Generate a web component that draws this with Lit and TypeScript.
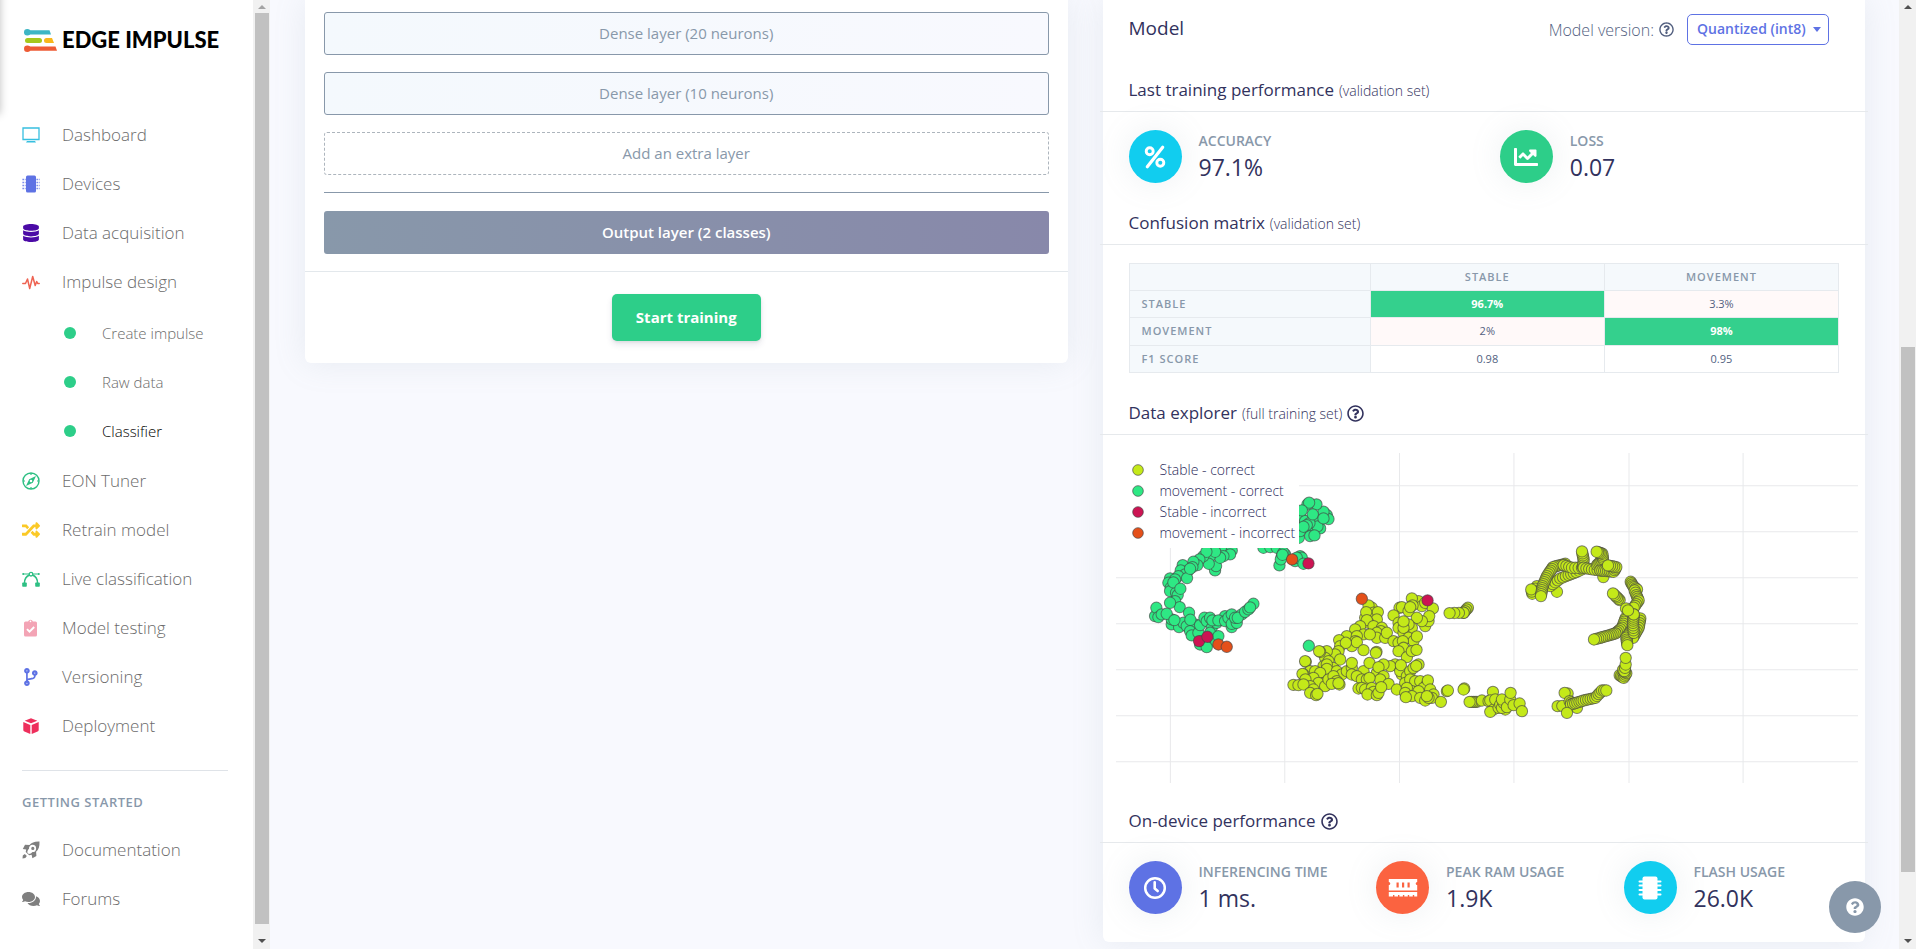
import { LitElement, html, svg, css, SVGTemplateResult, TemplateResult } from "lit";
import { customElement, property } from "lit/decorators.js";
import { classMap } from "lit/directives/class-map.js";

type Point = [number, number];

/* ---------- icons ---------- */

interface Icon {
  box: string;
  art: SVGTemplateResult;
}

const ICONS: Record<string, Icon> = {
  screen: {
    box: "0 0 18 18",
    art: svg`<path fill="none" stroke="currentColor" stroke-width="1.3" d="M1 2h16v11.500H1z"/><path fill="currentColor" d="M5 15h8l1 1.500H4z"/>`,
  },
  chip: {
    box: "0 0 18 18",
    art: svg`<rect x="4" y="0.500" width="10" height="17" rx="1.500" fill="currentColor"/><path stroke="currentColor" stroke-width="1.300" stroke-dasharray="1.300 1" d="M.5 4.500h3M.5 7.500h3M.5 10.500h3M.5 13.500h3M14.500 4.500h3M14.500 7.500h3M14.500 10.500h3M14.500 13.500h3"/>`,
  },
  chipBold: {
    box: "0 0 24 24",
    art: svg`<rect x="4.500" y="0.500" width="15" height="23" rx="2" fill="currentColor"/><path stroke="currentColor" stroke-width="2" stroke-linecap="round" d="M1.500 5.500h3M1.500 9.500h3M1.500 14h3M1.500 18.500h3M19.500 5.500h3M19.500 9.500h3M19.500 14h3M19.500 18.500h3"/>`,
  },
  database: {
    box: "-32 0 512 512",
    art: svg`<path fill="currentColor" d="M448 73.143v45.714C448 159.143 347.667 192 224 192S0 159.143 0 118.857V73.143C0 32.857 100.333 0 224 0s224 32.857 224 73.143zM448 176v102.857C448 319.143 347.667 352 224 352S0 319.143 0 278.857V176c48.125 33.143 136.208 48.572 224 48.572S399.874 209.143 448 176zm0 160v102.857C448 479.143 347.667 512 224 512S0 479.143 0 438.857V336c48.125 33.143 136.208 48.572 224 48.572S399.874 369.143 448 336z"/>`,
  },
  pulse: {
    box: "0 0 18 18",
    art: svg`<path fill="none" stroke="currentColor" stroke-width="1.500" stroke-linecap="round" stroke-linejoin="round" d="M.8 10.500h2.700l2-4.500 2.200 9.500 3-12 2.500 9 1.500-4 1 2h1.500"/>`,
  },
  compass: {
    box: "0 0 18 18",
    art: svg`<circle cx="9" cy="9" r="8" fill="none" stroke="currentColor" stroke-width="1.400"/><path fill="currentColor" fill-rule="evenodd" d="M14 4l-3.200 6.800L4 14l3.200-6.800zM9 7.700a1.300 1.300 0 100 2.600 1.300 1.300 0 000-2.600z"/><path stroke="currentColor" stroke-width="1.200" d="M9 1v2M9 15v2M1 9h2M15 9h2"/>`,
  },
  shuffle: {
    box: "0 0 512 512",
    art: svg`<path fill="currentColor" d="M504.971 359.029c9.373 9.373 9.373 24.569 0 33.941l-80 79.984c-15.010 15.010-40.971 4.490-40.971-16.971V416h-58.785a12.004 12.004 0 0 1-8.773-3.812l-70.556-75.596 53.333-57.143L352 336h32v-39.981c0-21.438 25.943-31.998 40.971-16.971l80 79.981zM12 176h84l52.781 56.551 53.333-57.143-70.556-75.596A11.999 11.999 0 0 0 122.785 96H12c-6.627 0-12 5.373-12 12v56c0 6.627 5.373 12 12 12zm372 0v39.984c0 21.460 25.961 31.980 40.971 16.971l80-79.984c9.373-9.373 9.373-24.569 0-33.941l-80-79.981C409.943 24.021 384 34.582 384 56.019V96h-58.785a12.004 12.004 0 0 0-8.773 3.812L96 336H12c-6.627 0-12 5.373-12 12v56c0 6.627 5.373 12 12 12h110.785c3.326 0 6.503-1.381 8.773-3.812L352 176h32z"/>`,
  },
  bezier: {
    box: "0 0 18 18",
    art: svg`<path fill="none" stroke="currentColor" stroke-width="1.500" d="M2.500 13C2.500 8.500 4.500 6.200 7.500 5M15.500 13c0-4.500-2-6.800-5-8"/><path stroke="currentColor" stroke-width="1" d="M1 4h6M11 4h6"/><circle cx="9" cy="4.200" r="1.800" fill="none" stroke="currentColor" stroke-width="1.300"/><rect x="0.200" y="12.500" width="4.600" height="4.300" rx="0.800" fill="currentColor"/><rect x="13.200" y="12.500" width="4.600" height="4.300" rx="0.800" fill="currentColor"/><circle cx="1.200" cy="4" r="1" fill="currentColor"/><circle cx="16.800" cy="4" r="1" fill="currentColor"/>`,
  },
  clipboard: {
    box: "0 0 18 18",
    art: svg`<path fill="currentColor" fill-rule="evenodd" d="M3.500 2.500h2.600a2.500 2.500 0 014.800 0h2.600A1.500 1.500 0 0115 4v12a1.500 1.500 0 01-1.500 1.500h-10A1.500 1.500 0 012 16V4a1.500 1.500 0 011.500-1.500zM8.500 1.600a.8.8 0 100 1.600.8.8 0 000-1.600z"/><path fill="none" stroke="#fff" stroke-width="1.900" d="M5 10.200l2.500 2.500 4.700-4.700"/>`,
  },
  branch: {
    box: "0 0 512 512",
    art: svg`<path fill="currentColor" d="M384 144c0-44.200-35.800-80-80-80s-80 35.800-80 80c0 36.400 24.300 67.100 57.500 76.800-.6 16.100-4.200 28.500-11 36.900-15.400 19.200-49.300 22.400-85.200 25.700-28.200 2.600-57.400 5.400-81.300 16.900v-144c32.500-10.200 56-40.500 56-76.300 0-44.200-35.800-80-80-80S0 35.800 0 80c0 35.800 23.500 66.100 56 76.300v199.300C23.500 365.900 0 396.200 0 432c0 44.200 35.800 80 80 80s80-35.800 80-80c0-34-21.200-63.100-51.200-74.600 3.100-5.200 7.800-9.800 14.900-13.400 16.200-8.200 40.400-10.400 66.100-12.800 42.200-3.900 90-8.400 118.200-43.400 14-17.400 21.100-39.800 21.600-67.900 31.600-10.800 54.400-40.700 54.400-75.900zM80 64c8.800 0 16 7.200 16 16s-7.200 16-16 16-16-7.200-16-16 7.200-16 16-16zm0 384c-8.800 0-16-7.200-16-16s7.200-16 16-16 16 7.200 16 16-7.200 16-16 16zm224-320c8.800 0 16 7.200 16 16s-7.200 16-16 16-16-7.200-16-16 7.200-16 16-16z" transform="translate(60 0)"/>`,
  },
  cube: {
    box: "0 0 18 18",
    art: svg`<path fill="currentColor" d="M9 1.200l6.300 2.500L9 6.300 2.700 3.700zM1.300 5l7 2.900V17l-5.900-2.500a1.600 1.600 0 01-1.100-1.500zM16.700 5l-7 2.900V17l5.900-2.500a1.600 1.600 0 001.100-1.500z"/>`,
  },
  rocket: {
    box: "0 0 18 18",
    art: svg`<path fill="currentColor" fill-rule="evenodd" d="M17.500.5c-5-.2-8 1-10 3.600L3 3.800.8 8l3.400.5-.5 2.500 3.500 3.300 2.400-.5.800 3.400 4-2.300-.3-4.200c2.600-2 3.600-5.200 3.400-10.200zM10.500 3.800a3.600 3.600 0 010 7.200 5 5 0 01-3.700 2L5.300 11.500c0-1.500.6-2.600 1.700-3.700a3.600 3.600 0 013.500-4zm.3 2a1.600 1.600 0 100 3.200 1.600 1.600 0 000-3.200z"/><path fill="currentColor" d="M.5 17.500l.3-3 2-1.500 2 2-1.500 2z"/>`,
  },
  comments: {
    box: "0 0 576 512",
    art: svg`<path fill="currentColor" d="M416 192c0-88.400-93.100-160-208-160S0 103.600 0 192c0 34.300 14.100 65.900 38 92-13.400 30.200-35.500 54.200-35.800 54.500-2.200 2.300-2.800 5.700-1.500 8.700S4.800 352 8 352c36.600 0 66.900-12.300 88.700-25 32.200 15.700 70.300 25 111.300 25 114.900 0 208-71.600 208-160zm122 220c23.900-26 38-57.700 38-92 0-66.900-53.500-124.200-129.300-148.100.9 6.600 1.300 13.300 1.300 20.100 0 105.900-107.700 192-240 192-10.800 0-21.300-.8-31.700-1.900C207.800 439.600 281.800 480 368 480c41 0 79.100-9.200 111.300-25 21.800 12.700 52.100 25 88.700 25 3.200 0 6.100-1.900 7.300-4.800 1.300-2.900.7-6.300-1.500-8.700-.3-.2-22.400-24.200-35.800-54.500z"/>`,
  },
  help: {
    box: "0 0 512 512",
    art: svg`<path fill="currentColor" d="M256 8C119.043 8 8 119.083 8 256c0 136.997 111.043 248 248 248s248-111.003 248-248C504 119.083 392.957 8 256 8zm0 448c-110.532 0-200-89.431-200-200 0-110.495 89.472-200 200-200 110.491 0 200 89.471 200 200 0 110.530-89.431 200-200 200zm107.244-255.200c0 67.052-72.421 68.084-72.421 92.863V300c0 6.627-5.373 12-12 12h-45.647c-6.627 0-12-5.373-12-12v-8.659c0-35.745 27.100-50.034 47.579-61.516 17.561-9.845 28.324-16.541 28.324-29.579 0-17.246-21.999-28.693-39.784-28.693-23.189 0-33.894 10.977-48.942 29.969-4.057 5.120-11.460 6.071-16.666 2.124l-27.824-21.098c-5.107-3.872-6.251-11.066-2.644-16.363C184.846 131.491 214.940 112 261.794 112c49.071 0 101.450 38.304 101.450 88.800zM298 368c0 23.159-18.841 42-42 42s-42-18.841-42-42 18.841-42 42-42 42 18.841 42 42z"/>`,
  },
  helpSolid: {
    box: "0 0 512 512",
    art: svg`<path fill="currentColor" d="M504 256c0 136.997-111.043 248-248 248S8 392.997 8 256C8 119.083 119.043 8 256 8s248 111.083 248 248zM262.655 90c-54.497 0-89.255 22.957-116.549 63.758-3.536 5.286-2.353 12.415 2.715 16.258l34.699 26.310c5.205 3.947 12.621 3.008 16.665-2.122 17.864-22.658 30.113-35.797 57.303-35.797 20.429 0 45.698 13.148 45.698 32.958 0 14.976-12.363 22.667-32.534 33.976C247.128 238.528 216 254.941 216 296v4c0 6.627 5.373 12 12 12h56c6.627 0 12-5.373 12-12v-1.333c0-28.462 83.186-29.647 83.186-106.667 0-58.002-60.165-102-116.531-102zM256 338c-25.365 0-46 20.635-46 46 0 25.364 20.635 46 46 46s46-20.636 46-46c0-25.365-20.635-46-46-46z"/>`,
  },
  percent: {
    box: "0 0 24 24",
    art: svg`<g fill="none" stroke="currentColor" stroke-width="2.900"><circle cx="6.700" cy="6.200" r="3.500"/><circle cx="17.300" cy="17.800" r="3.500"/></g><path stroke="currentColor" stroke-width="3.200" stroke-linecap="round" d="M4.300 21.700L19.700 2.300"/>`,
  },
  trend: {
    box: "0 0 512 512",
    art: svg`<path fill="currentColor" d="M496 384H64V80c0-8.840-7.160-16-16-16H16C7.160 64 0 71.160 0 80v336c0 17.670 14.330 32 32 32h464c8.840 0 16-7.160 16-16v-32c0-8.840-7.160-16-16-16zM464 96H345.940c-21.380 0-32.090 25.850-16.970 40.970l32.400 32.400L288 242.750l-73.370-73.370c-12.500-12.500-32.760-12.500-45.250 0l-68.690 68.690c-6.250 6.250-6.250 16.380 0 22.630l22.620 22.620c6.250 6.250 16.380 6.250 22.630 0L192 237.250l73.370 73.370c12.500 12.500 32.760 12.500 45.250 0l96-96 32.400 32.400c15.120 15.120 40.970 4.410 40.970-16.970V112c.01-8.840-7.150-16-15.990-16z"/>`,
  },
  clock: {
    box: "0 0 24 24",
    art: svg`<circle cx="12" cy="12" r="9.800" fill="none" stroke="currentColor" stroke-width="2.500"/><path fill="none" stroke="currentColor" stroke-width="2.600" stroke-linecap="round" stroke-linejoin="round" d="M11.700 6.200v6.200l3 2.600"/>`,
  },
  ram: {
    box: "0 0 30 20",
    art: svg`<path fill="currentColor" fill-rule="evenodd" d="M.8 1h28.400v3a1.500 1.500 0 000 3v5.500H.8V7a1.500 1.500 0 000-3zM8.500 4.500v5h2.200v-5zM14 4.500v5h2.200v-5zM19.500 4.500v5h2.200v-5zM.8 14h28.400v4.500h-3v-1.500h-1.400v1.500h-3.600v-1.500h-1.400v1.500h-3.500v-1.500h-1.400v1.500h-3.500v-1.500h-1.400v1.500H6.400v-1.500H5v1.500H.8z"/>`,
  },
};

@customElement("ei-icon")
class EiIcon extends LitElement {
  @property() name = "";

  static styles = css`
    :host { display: inline-flex; width: 18px; height: 18px; flex: none; }
    svg { width: 100%; height: 100%; display: block; }
  `;

  render() {
    const icon = ICONS[this.name];
    return html`<svg viewBox=${icon.box} aria-hidden="true">${icon.art}</svg>`;
  }
}

/* ---------- scroll bars ---------- */

@customElement("scroll-rail")
class ScrollRail extends LitElement {
  @property({ type: Number }) before = 0;
  @property({ type: Number }) size = 1;
  @property({ type: Number }) after = 0;

  static styles = css`
    :host { display: flex; flex-direction: column; width: 17px; flex: none; background: #f1f1f1; }
    .arrow { height: 13px; display: flex; align-items: center; justify-content: center; }
    .arrow.down { height: 17px; }
    .arrow svg { width: 8px; height: 4px; display: block; fill: #505050; }
    .arrow.idle svg { fill: #a3a3a3; }
    .thumb { background: #c1c1c1; margin: 0 1px 0 2px; }
  `;

  render() {
    return html`
      <div class=${classMap({ arrow: true, idle: this.before === 0 })}>
        <svg viewBox="0 0 8 4" aria-hidden="true"><path d="M0 4L4 0l4 4z"/></svg>
      </div>
      <div style="flex-grow:${this.before}"></div>
      <div class="thumb" style="flex-grow:${this.size}"></div>
      <div style="flex-grow:${this.after}"></div>
      <div class="arrow down">
        <svg viewBox="0 0 8 4" aria-hidden="true"><path d="M0 0l4 4 4-4z"/></svg>
      </div>
    `;
  }
}

/* ---------- side navigation ---------- */

const NAV: { icon: string; label: string; tone: string; children?: string[] }[] = [
  { icon: "screen", label: "Dashboard", tone: "info" },
  { icon: "chip", label: "Devices", tone: "primary" },
  { icon: "database", label: "Data acquisition", tone: "purple" },
  { icon: "pulse", label: "Impulse design", tone: "danger", children: ["Create impulse", "Raw data", "Classifier"] },
  { icon: "compass", label: "EON Tuner", tone: "success" },
  { icon: "shuffle", label: "Retrain model", tone: "yellow" },
  { icon: "bezier", label: "Live classification", tone: "success" },
  { icon: "clipboard", label: "Model testing", tone: "pink" },
  { icon: "branch", label: "Versioning", tone: "primary" },
  { icon: "cube", label: "Deployment", tone: "red" },
];

const HELP_NAV = [
  { icon: "rocket", label: "Documentation", tone: "gray" },
  { icon: "comments", label: "Forums", tone: "gray" },
];

@customElement("side-nav")
class SideNav extends LitElement {
  static styles = css`
    :host { display: block; width: 253px; flex: none; background: #fff; overflow: hidden; position: relative; }
    .edge { position: absolute; left: -20px; top: -20px; width: 20px; height: 134px; box-shadow: 0 0 8px rgba(0, 0, 0, 0.25); }
    .logo { display: flex; align-items: center; gap: 5px; height: 24px; padding: 28px 0 0 24px; text-decoration: none; color: #000;
      font: 900 22px/24px "Lato", "Inter", sans-serif; white-space: nowrap; }
    .logo svg { width: 33px; height: 24px; flex: none; }
    ul { list-style: none; margin: 0; padding: 0; }
    .menu { margin-top: 58px; }
    .item { display: flex; align-items: center; height: 49px; padding-left: 22px; gap: 22px; text-decoration: none;
      font-size: 17px; line-height: 24px; font-weight: 300; color: #6b6b6b; }
    .sub { padding: 2px 0 1px; }
    .child { display: flex; align-items: center; gap: 26px; height: 49px; padding-left: 64px; font-size: 15px; font-weight: 300;
      color: #6b6b6b; text-decoration: none; }
    .child.active { color: #000; }
    .dot { width: 12px; height: 12px; border-radius: 50%; background: #2dce89; }
    hr { border: 0; border-top: 1px solid #dfe3e8; margin: 20px 25px 0 22px; }
    h2 { margin: 21px 0 13px; padding-left: 22px; font-size: 13px; line-height: 20px; font-weight: 600; letter-spacing: 0.5px; color: #8898aa; }
    .info { color: #37bfe0; }
    .primary { color: #5e72e4; }
    .purple { color: #4b0aa6; }
    .danger { color: #ee6352; }
    .success { color: #2dbf83; }
    .yellow { color: #fbc926; }
    .pink { color: #f3a4b5; }
    .red { color: #ee2f5c; }
    .gray { color: #7f7f7f; }
  `;

  private item(i: { icon: string; label: string; tone: string }): TemplateResult {
    return html`<a class="item" href="#"><ei-icon class=${i.tone} name=${i.icon}></ei-icon>${i.label}</a>`;
  }

  render() {
    return html`
      <div class="edge"></div>
      <a class="logo" href="#">
        <svg viewBox="0 0 33 24" aria-hidden="true">
          <g fill="#3db6c4"><circle cx="3.300" cy="4.300" r="3.300"/><path d="M3 2.200h22.500l1.500 4.300H3z"/></g>
          <rect x="1" y="10" width="17" height="5" rx="2.500" fill="#a6c81c"/>
          <path d="M22.500 10h5.500l2 5h-7.500a2.500 2.500 0 010-5z" fill="#f8b71c"/>
          <g fill="#ee5b35"><circle cx="3.300" cy="20.700" r="3.300"/><path d="M3 18.600h28.500l1.500 4.200H3z"/></g>
        </svg>
        <span>EDGE IMPULSE</span>
      </a>
      <nav>
        <ul class="menu">
          ${NAV.map((n) => html`<li>
            ${this.item(n)}
            ${n.children
              ? html`<ul class="sub">
                  ${n.children.map((c) => html`<li>
                    <a href="#" class=${classMap({ child: true, active: c === "Classifier" })}><span class="dot"></span>${c}</a>
                  </li>`)}
                </ul>`
              : ""}
          </li>`)}
        </ul>
        <hr />
        <h2>GETTING STARTED</h2>
        <ul>${HELP_NAV.map((n) => html`<li>${this.item(n)}</li>`)}</ul>
      </nav>
    `;
  }
}

/* ---------- network architecture card ---------- */

@customElement("network-card")
class NetworkCard extends LitElement {
  static styles = css`
    :host { display: block; background: #fff; border-radius: 0 0 6px 6px; box-shadow: 0 0 32px rgba(136, 152, 170, 0.15); }
    .layers { display: flex; flex-direction: column; gap: 17px; padding: 12px 19px 17px; border-bottom: 1px solid #e3e8ec; }
    button { font: inherit; cursor: pointer; }
    .layer { height: 43px; padding: 0 6px 2px; border: 1px solid #8898aa; border-radius: 3px; color: #8898aa; font-size: 15px;
      background: linear-gradient(87deg, #f4f9fd, #f8f9fe); }
    .extra { border: 1px dashed #adb5bd; background: #fff; }
    .output { border: 0; color: #fff; font-weight: 600; background: linear-gradient(87deg, #8898aa, #8888aa); }
    hr { margin: 0 0 1px; border: 0; border-top: 1px solid #8898aa; width: 100%; }
    footer { display: flex; justify-content: center; padding: 22px; }
    .train { height: 47px; padding: 0 24px 2px; border: 0; border-radius: 5px; background: #2dce89; color: #fff; font-size: 15px;
      font-weight: 700; box-shadow: 0 4px 6px rgba(50, 50, 93, 0.11), 0 1px 3px rgba(0, 0, 0, 0.08); }
  `;

  render() {
    return html`
      <div class="layers">
        <button class="layer">Dense layer (20 neurons)</button>
        <button class="layer">Dense layer (10 neurons)</button>
        <button class="layer extra">Add an extra layer</button>
        <hr />
        <button class="layer output">Output layer (2 classes)</button>
      </div>
      <footer><button class="train">Start training</button></footer>
    `;
  }
}

/* ---------- data explorer ---------- */

const shift = (dx: number, dy: number, points: Point[]): Point[] => points.map(([x, y]) => [x + dx, y + dy]);

/* Samples that follow one another closely along a path. */
const trail = (step: number, ...stops: Point[]): Point[] => {
  const out: Point[] = [stops[0]];
  for (let i = 1; i < stops.length; i++) {
    const [ax, ay] = stops[i - 1];
    const [bx, by] = stops[i];
    const n = Math.max(1, Math.round(Math.hypot(bx - ax, by - ay) / step));
    for (let k = 1; k <= n; k++) out.push([ax + ((bx - ax) * k) / n, ay + ((by - ay) * k) / n]);
  }
  return out;
};

const MOVEMENT_OK: Point[] = shift(-18, -36, [
  [566, 290], [570, 270], [572, 230], [585, 240], [650, 222], [655, 234], [625, 240], [640, 212], [619, 190], [592, 190],
  [597, 185], [575, 208], [600, 265], [630, 262], [622, 256], [600, 285], [613, 283], [598, 246], [608, 220], [590, 252],
  [580, 257], [640, 232],
  [345, 318], [365, 328], [360, 340], [340, 345], [315, 388], [318, 375], [330, 350], [300, 345], [296, 368], [280, 345],
  [315, 332], [289, 332], [268, 355], [262, 372], [250, 362], [218, 372], [235, 388], [247, 378], [212, 388], [225, 400],
  [205, 405], [231, 411], [240, 383], [180, 412], [195, 415], [175, 425], [182, 440], [180, 450], [198, 455], [190, 424],
  [203, 462], [211, 443], [195, 480], [209, 498], [180, 485], [135, 525], [139, 500], [145, 528], [155, 520], [185, 550],
  [185, 535], [170, 518], [207, 558], [220, 545], [193, 537], [237, 515], [230, 555], [255, 550], [240, 570], [241, 536],
  [245, 583], [265, 575], [270, 552], [283, 530], [290, 540], [300, 530], [305, 560], [300, 575], [320, 545], [307, 538],
  [345, 525], [325, 538], [345, 540], [355, 530], [365, 520], [365, 558], [365, 548], [380, 545], [375, 530], [395, 520],
  [383, 530], [405, 512], [415, 505], [430, 488], [420, 499], [315, 600], [325, 585], [285, 605], [270, 610], [275, 600], [290, 618],
  [460, 320], [480, 318], [500, 320], [525, 340], [520, 335], [515, 345], [508, 373], [512, 355], [517, 341], [555, 360],
  [570, 345], [575, 350], [560, 350], [580, 368], [596, 614],
]);

const STABLE_OK: Point[] = [
  ...shift(-18, -36, [
    [925, 480], [905, 472], [868, 500], [875, 498], [895, 510], [935, 495], [907, 493], [900, 498], [945, 485], [968, 502],
    [945, 555], [955, 540], [957, 525], [935, 540], [920, 530], [850, 523], [785, 500], [775, 493], [790, 515], [803, 513],
    [765, 530], [768, 513], [800, 535], [775, 545], [770, 537], [750, 555], [735, 565], [790, 555], [815, 560], [812, 570],
    [800, 575], [800, 590], [825, 590], [830, 575], [760, 580], [779, 580], [865, 545], [905, 560], [895, 550], [865, 560],
    [880, 575], [880, 560], [880, 541], [895, 590], [910, 600], [920, 586], [850, 600], [865, 605], [878, 600], [710, 585],
    [740, 585], [687, 597], [690, 615], [735, 600], [725, 615], [740, 603], [707, 605], [760, 627], [799, 632], [797, 635],
    [880, 620], [865, 630], [890, 648], [905, 630], [919, 626], [685, 630], [675, 640], [650, 630], [645, 650], [630, 632],
    [627, 630], [587, 662], [585, 660], [655, 660], [640, 675], [670, 680], [650, 670], [650, 683], [680, 690], [695, 700],
    [710, 690], [690, 655], [725, 680], [725, 700], [725, 665], [760, 690], [740, 705], [778, 665], [855, 670], [840, 675],
    [820, 670], [800, 695], [805, 678], [755, 715], [770, 715], [820, 705], [810, 715], [778, 710], [835, 728], [745, 742],
    [755, 740], [765, 745], [785, 740], [790, 752], [772, 760], [800, 762], [805, 755], [813, 738], [860, 745], [875, 700],
    [870, 690], [890, 705], [872, 672], [900, 690], [885, 725], [900, 715], [910, 680], [925, 670], [918, 674], [915, 720],
    [930, 720], [950, 730], [940, 740], [953, 718], [960, 745], [905, 750], [925, 750], [890, 740], [885, 755], [905, 765],
    [887, 768], [930, 770], [970, 760], [965, 770], [945, 778], [955, 770], [950, 765], [600, 690], [580, 700], [577, 698],
    [615, 690], [630, 695], [610, 710], [586, 715], [640, 725], [625, 725], [645, 735], [600, 735], [610, 745], [550, 731],
    [565, 732], [580, 730], [600, 755], [618, 762], [622, 758], [655, 715], [670, 705], [680, 720], [665, 728], [688, 730],
    [685, 726], [992, 782], [1010, 750], [1013, 748], [1062, 742], [1060, 745],
  ]),
  ...shift(-18, -36, trail(6, [1073, 500], [1060, 515])),
  ...shift(-18, -36, trail(14, [1060, 515], [1018, 516])),
  ...shift(-18, -36, trail(6, [1100, 782], [1078, 782])),
  ...shift(-18, -36, [
    [1115, 778], [1135, 780], [1148, 752], [1140, 778], [1150, 805], [1140, 812], [1155, 775], [1165, 800], [1170, 790],
    [1185, 805], [1175, 800], [1180, 785], [1175, 775], [1190, 798], [1200, 775], [1201, 755], [1210, 792], [1228, 787],
    [1235, 810],
  ]),
  ...shift(1152, -36, [
    ...trail(8, [110, 435], [96, 458], [93, 445]),
    [170, 452],
    ...trail(9, [150, 435], [180, 412], [205, 402], [228, 393], [245, 385]),
    ...trail(6, [195, 368], [158, 378], [140, 405], [127, 435], [122, 465]),
    ...trail(10, [190, 372], [215, 380], [245, 380]),
    ...trail(7, [248, 378], [250, 355], [245, 331]),
    [309, 408],
    ...trail(10, [250, 380], [275, 385], [300, 388]),
    ...trail(5, [290, 372], [308, 355], [306, 338], [289, 332]),
    ...trail(6, [300, 388], [340, 392], [348, 378], [323, 373]),
    ...trail(6, [358, 477], [338, 457]),
    ...trail(5, [391, 422], [398, 435], [410, 445]),
    ...trail(6, [403, 448], [408, 462], [415, 478], [400, 500]),
    ...trail(7, [420, 532], [415, 560], [398, 590]),
    ...trail(7, [376, 530], [365, 560], [345, 577]),
    ...trail(6, [345, 577], [300, 590], [281, 595]),
    ...trail(6, [398, 560], [378, 590], [381, 612]),
    ...trail(7, [400, 575], [398, 545], [400, 520]),
    [377, 502], [400, 520], [383, 508],
    ...trail(5, [358, 702], [370, 710], [378, 696], [368, 686]),
    ...trail(12, [372, 690], [376, 670]),
    [376, 650],
    [172, 795], [186, 794], [202, 757], [193, 755],
    ...trail(6, [208, 780], [230, 800]),
    ...trail(7, [212, 790], [250, 778], [285, 770], [305, 748], [318, 748]),
    [200, 815],
  ]),
];

const SERIES: { label: string; color: string; points: Point[] }[] = [
  { label: "Stable - correct", color: "#c4e919", points: STABLE_OK },
  { label: "movement - correct", color: "#2ee884", points: MOVEMENT_OK },
  { label: "Stable - incorrect", color: "#cc1453", points: shift(-18, -36, [[595, 367], [267, 600], [292, 587], [952, 478]]) },
  { label: "movement - incorrect", color: "#e4501a", points: shift(-18, -36, [[546, 355], [325, 610], [350, 617], [755, 473]]) },
];

@customElement("data-explorer")
class DataExplorer extends LitElement {
  static styles = css`
    :host { display: block; position: relative; }
    .plot { display: block; width: 100%; height: auto; }
    .legend { position: absolute; left: 0; top: 0; margin: 0; padding: 6px 4px 5px 16px; list-style: none; background: #fff; }
    .legend li { display: flex; align-items: center; gap: 16px; height: 21px; font-size: 14px; font-weight: 300; color: #2a2a5a; }
    .legend svg { width: 12px; height: 12px; }
  `;

  render() {
    return html`
      <svg class="plot" viewBox="0 0 2226 990" role="img" aria-label="Data explorer">
        <g stroke="#e8e9eb" stroke-width="3">
          ${[98, 236, 374, 512, 650, 788, 926].map((y) => svg`<path d="M0 ${y}H2226"/>`)}
          ${[163, 506, 850, 1193, 1538, 1880].map((x) => svg`<path d="M${x} 0V990"/>`)}
        </g>
        ${SERIES.map((s) => svg`<g fill=${s.color} stroke="#444" stroke-opacity="0.650" stroke-width="3">
          ${s.points.map(([x, y]) => svg`<circle cx=${x} cy=${y} r="17"/>`)}
        </g>`)}
      </svg>
      <ul class="legend">
        ${SERIES.map((s) => html`<li>
          <svg viewBox="0 0 36 36" aria-hidden="true"><circle cx="18" cy="18" r="16" fill=${s.color} stroke="#444" stroke-opacity="0.650" stroke-width="3"/></svg>
          ${s.label}
        </li>`)}
      </ul>
    `;
  }
}

/* ---------- model card ---------- */

interface Stat {
  icon: string;
  tone: string;
  label: string;
  value: string;
}

@customElement("model-card")
class ModelCard extends LitElement {
  static styles = css`
    :host { display: block; background: #fff; border-radius: 0 0 6px 6px; box-shadow: 0 0 32px rgba(136, 152, 170, 0.15); }
    .top { display: flex; align-items: center; justify-content: space-between; padding: 14px 36px 0 26px; height: 31px; }
    h1 { margin: 0 0 4px; font-size: 19px; line-height: 28px; font-weight: 500; color: #32325d; }
    .version { display: flex; align-items: center; font-size: 16px; color: #525f7f; font-weight: 300; }
    .version ei-icon { width: 15px; height: 15px; margin: 0 13px 0 5px; }
    .picker { display: grid; align-items: center; }
    .picker > * { grid-area: 1 / 1; }
    select { appearance: none; height: 31px; width: 142px; padding: 0 10px 2px 9px; border: 1px solid #5e72e4; border-radius: 5px; background: #fff;
      color: #5e72e4; font: inherit; font-size: 14px; font-weight: 600; }
    .caret { justify-self: end; width: 8px; height: 5px; margin-right: 8px; fill: #5e72e4; pointer-events: none; }
    .head { display: flex; align-items: baseline; gap: 5px; height: 24px; margin: 0 -3px; padding: 0 29px 9px; border-bottom: 1px solid #e6e9ec; color: #32325d; }
    .head.first { margin-top: 33px; }
    h2 { margin: 0; font-size: 17px; line-height: 24px; font-weight: 500; }
    small { font-size: 14px; font-weight: 300; }
    .head ei-icon { width: 17px; height: 17px; align-self: center; }
    .body { padding: 18px 26px 28px; }
    .body.chart { padding: 18px 7px 26px 13px; }
    .stats { display: grid; grid-template-columns: repeat(2, 1fr); column-gap: 32px; }
    .stats.three { grid-template-columns: repeat(3, 1fr); }
    .stat { display: flex; gap: 17px; height: 53px; }
    .badge { width: 53px; height: 53px; border-radius: 50%; display: flex; align-items: center; justify-content: center; flex: none; color: #fff;
      box-shadow: 0 0 32px rgba(136, 152, 170, 0.15); }
    .badge ei-icon { width: 24px; height: 24px; }
    .badge .ram { width: 30px; height: 20px; }
    .cyan { background: #11cdef; }
    .green { background: #2dce89; }
    .blue { background: #5e72e4; }
    .orange { background: #fb6340; }
    dl, dt, dd { margin: 0; }
    dt { font-size: 14px; line-height: 22px; font-weight: 600; color: #8898aa; white-space: nowrap; }
    dd { font-size: 23px; line-height: 31px; font-weight: 500; color: #32325d; }
    table { width: 100%; height: 110px; border-collapse: collapse; table-layout: fixed; font-size: 11px; line-height: 16px; text-align: center; color: #525f7f; }
    tr { height: 27px; }
    col.names { width: 34%; }
    th, td { border: 1px solid #e6eaee; padding: 5px 12px; }
    th { background: #f5f9fc; color: #8898aa; font-weight: 600; letter-spacing: 1px; }
    tbody th { text-align: left; }
    .miss { background: #fff9f9; }
    .hit { background: #34d08d; color: #fff; font-weight: 700; }
  `;

  private stats(list: Stat[]): TemplateResult {
    return html`<div class=${classMap({ stats: true, three: list.length === 3 })}>
      ${list.map((s) => html`<div class="stat">
        <span class="badge ${s.tone}"><ei-icon class=${s.icon} name=${s.icon}></ei-icon></span>
        <dl><dt>${s.label}</dt><dd>${s.value}</dd></dl>
      </div>`)}
    </div>`;
  }

  render() {
    return html`
      <div class="top">
        <h1>Model</h1>
        <div class="version">
          <label for="version">Model version:</label><ei-icon name="help"></ei-icon>
          <div class="picker">
            <select id="version"><option>Quantized (int8)</option><option>Unoptimized (float32)</option></select>
            <svg class="caret" viewBox="0 0 8 5" aria-hidden="true"><path d="M0 0h8L4 5z"/></svg>
          </div>
        </div>
      </div>

      <div class="head first"><h2>Last training performance</h2><small>(validation set)</small></div>
      <div class="body">
        ${this.stats([
          { icon: "percent", tone: "cyan", label: "ACCURACY", value: "97.1%" },
          { icon: "trend", tone: "green", label: "LOSS", value: "0.07" },
        ])}
      </div>

      <div class="head"><h2>Confusion matrix</h2><small>(validation set)</small></div>
      <div class="body">
        <table>
          <colgroup><col class="names" /><col /><col /></colgroup>
          <thead><tr><th></th><th scope="col">STABLE</th><th scope="col">MOVEMENT</th></tr></thead>
          <tbody>
            <tr><th scope="row">STABLE</th><td class="hit">96.7%</td><td class="miss">3.3%</td></tr>
            <tr><th scope="row">MOVEMENT</th><td class="miss">2%</td><td class="hit">98%</td></tr>
            <tr><th scope="row">F1 SCORE</th><td>0.98</td><td>0.95</td></tr>
          </tbody>
        </table>
      </div>

      <div class="head"><h2>Data explorer</h2><small>(full training set)</small><ei-icon name="help"></ei-icon></div>
      <div class="body chart"><data-explorer></data-explorer></div>

      <div class="head"><h2>On-device performance</h2><ei-icon name="help"></ei-icon></div>
      <div class="body">
        ${this.stats([
          { icon: "clock", tone: "blue", label: "INFERENCING TIME", value: "1 ms." },
          { icon: "ram", tone: "orange", label: "PEAK RAM USAGE", value: "1.9K" },
          { icon: "chipBold", tone: "cyan", label: "FLASH USAGE", value: "26.0K" },
        ])}
      </div>
    `;
  }
}

/* ---------- page ---------- */

@customElement("app-root")
class AppRoot extends LitElement {
  static styles = css`
    :host { display: flex; height: 100vh; overflow: hidden; background: #f8f9fe; font-family: "Open Sans", "Noto Sans", sans-serif; }
    main { flex: 1; min-width: 0; display: grid; grid-template-columns: 1fr 1fr; gap: 35px; align-items: start; padding: 0 34px 0 35px; overflow: hidden; }
    .fab { position: absolute; right: 35px; bottom: 16px; width: 52px; height: 52px; border: 0; border-radius: 50%; padding: 0;
      background: #8898aa; color: #fff; display: flex; align-items: center; justify-content: center; cursor: pointer; }
  `;

  render() {
    return html`
      <side-nav></side-nav>
      <scroll-rail .size=${911} .after=${8}></scroll-rail>
      <main>
        <network-card></network-card>
        <model-card></model-card>
      </main>
      <scroll-rail .before=${334} .size=${525} .after=${60}></scroll-rail>
      <button class="fab" aria-label="Help"><ei-icon name="helpSolid"></ei-icon></button>
    `;
  }
}
